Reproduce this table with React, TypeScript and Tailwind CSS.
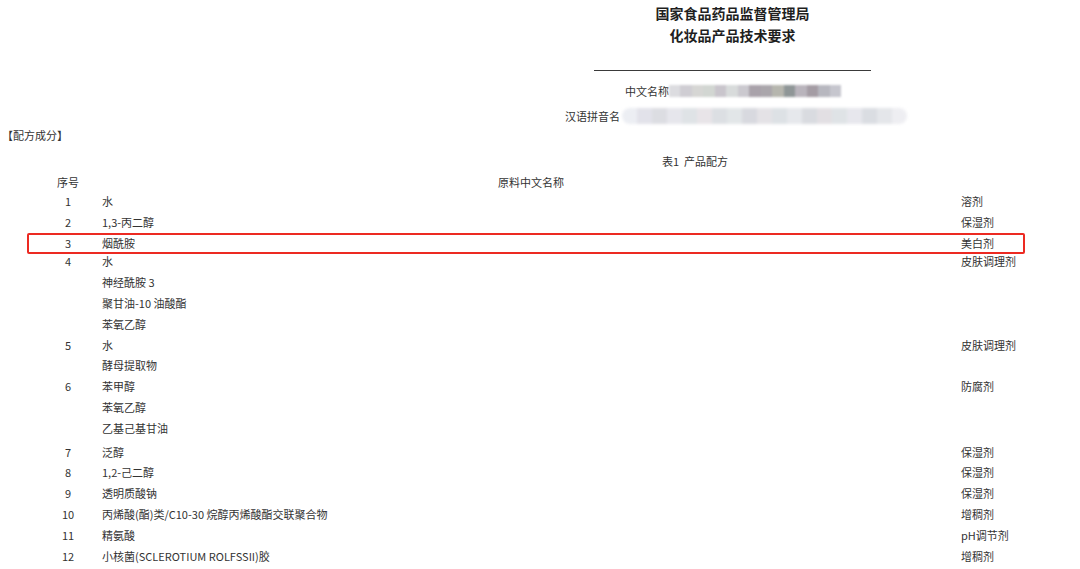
import React from "react";

type Entry = {
  no: string;
  names: string[];
  role: string;
  gapTop?: string;
  marked?: boolean;
};

const entries: Entry[] = [
  { no: "1", names: ["水"], role: "溶剂" },
  { no: "2", names: ["1,3-丙二醇"], role: "保湿剂" },
  { no: "3", names: ["烟酰胺"], role: "美白剂", marked: true },
  { no: "4", names: ["水", "神经酰胺 3", "聚甘油-10 油酸酯", "苯氧乙醇"], role: "皮肤调理剂", gapTop: "-mt-[2.3px]" },
  { no: "5", names: ["水", "酵母提取物"], role: "皮肤调理剂" },
  { no: "6", names: ["苯甲醇", "苯氧乙醇", "乙基己基甘油"], role: "防腐剂" },
  { no: "7", names: ["泛醇"], role: "保湿剂", gapTop: "mt-[3.1px]" },
  { no: "8", names: ["1,2-己二醇"], role: "保湿剂" },
  { no: "9", names: ["透明质酸钠"], role: "保湿剂" },
  { no: "10", names: ["丙烯酸(酯)类/C10-30 烷醇丙烯酸酯交联聚合物"], role: "增稠剂" },
  { no: "11", names: ["精氨酸"], role: "pH调节剂" },
  { no: "12", names: ["小核菌(SCLEROTIUM ROLFSSII)胶"], role: "增稠剂" },
];

const cnBlur = [
  "bg-[#dcdce0]", "bg-[#cfcdd3]", "bg-[#d6d6d4]", "bg-[#d2d6d2]", "bg-[#c9c5cc]",
  "bg-[#d8dbdb]", "bg-[#cbc9cf]", "bg-[#a9a2aa]", "bg-[#aaa6ab]", "bg-[#b6b6ae]",
  "bg-[#8f9697]", "bg-[#b9b4bc]", "bg-[#a49ca4]", "bg-[#b7b7bf]", "bg-[#c6c6ce]",
];

const pyBlur = [
  "bg-[#eceef3]", "bg-[#e2e2ea]", "bg-[#dcdde2]", "bg-[#e6e6ec]", "bg-[#dfe3e6]",
  "bg-[#e8e4e8]", "bg-[#dcdfe3]", "bg-[#e2e6e8]", "bg-[#d8d9df]", "bg-[#e4e2e6]",
  "bg-[#dde1e5]", "bg-[#e6e8ec]", "bg-[#d9dbe0]", "bg-[#e2dfe3]", "bg-[#dfe3e6]",
  "bg-[#e7e7ed]", "bg-[#dadde2]", "bg-[#e4e6ea]", "bg-[#eeeef2]",
];

function Line({ no, name, role }: { no?: string; name: string; role?: string }) {
  return (
    <div className="flex h-[20.8px] items-center">
      <div className="w-[50px] shrink-0" />
      <div className="w-[36px] shrink-0 text-center">{no}</div>
      <div className="w-[16px] shrink-0" />
      <div className="flex-1 whitespace-nowrap">{name}</div>
      <div className="w-[119px] shrink-0 whitespace-nowrap">{role}</div>
    </div>
  );
}

export default function App() {
  return (
    <div className="w-[1080px] h-[569px] overflow-hidden bg-white text-[11px] text-[#333] font-['Noto_Sans_CJK_SC','Noto_Sans',sans-serif]">
      {/* 标题 */}
      <div className="pt-[2px]">
        <div className="ml-[594px] w-[277px] text-center text-[14px] font-bold text-[#1f1f1f]">
          <div className="h-[22px] leading-[22px]">国家食品药品监督管理局</div>
          <div className="h-[22px] leading-[22px]">化妆品产品技术要求</div>
        </div>
        <div className="mt-[24px] ml-[594px] w-[277px] h-px bg-[#3a3a3a]" />
      </div>

      {/* 名称 */}
      <div className="mt-[12px] ml-[625px] flex h-[16px] items-center">
        <span className="w-[44px] whitespace-nowrap">中文名称</span>
        <div className="flex h-[12px] w-[172px] blur-[1px]">
          {cnBlur.map((c, i) => (
            <div key={i} className={`flex-1 ${c}`} />
          ))}
        </div>
      </div>
      <div className="mt-[9px] ml-[565px] flex h-[16px] items-center">
        <span className="w-[57px] whitespace-nowrap">汉语拼音名</span>
        <div className="flex h-[16px] w-[285px] overflow-hidden rounded-full blur-[1.5px]">
          {pyBlur.map((c, i) => (
            <div key={i} className={`flex-1 ${c}`} />
          ))}
        </div>
      </div>

      <div className="mt-[3px] pl-[2px] h-[16px] leading-[16px]">【配方成分】</div>

      <div className="mt-[10px] pl-[662px] h-[16px] leading-[16px] whitespace-nowrap">表1&nbsp;&nbsp;产品配方</div>

      {/* 表头 */}
      <div className="mt-[5px] flex h-[16px] items-center">
        <div className="w-[50px] shrink-0" />
        <div className="w-[36px] shrink-0 text-center whitespace-nowrap">序号</div>
        <div className="pl-[412px] whitespace-nowrap">原料中文名称</div>
      </div>

      {/* 配方 */}
      <div className="mt-[1.2px]">
        {entries.map((e) => (
          <div key={e.no} className={`relative ${e.gapTop ?? ""}`}>
            {e.names.map((n, i) => (
              <Line key={i} no={i === 0 ? e.no : undefined} name={n} role={i === 0 ? e.role : undefined} />
            ))}
            {e.marked && (
              <div className="absolute left-[27px] top-[0.5px] h-[21px] w-[998px] rounded-[2px] border-2 border-[#ec2a22]" />
            )}
          </div>
        ))}
      </div>
    </div>
  );
}
